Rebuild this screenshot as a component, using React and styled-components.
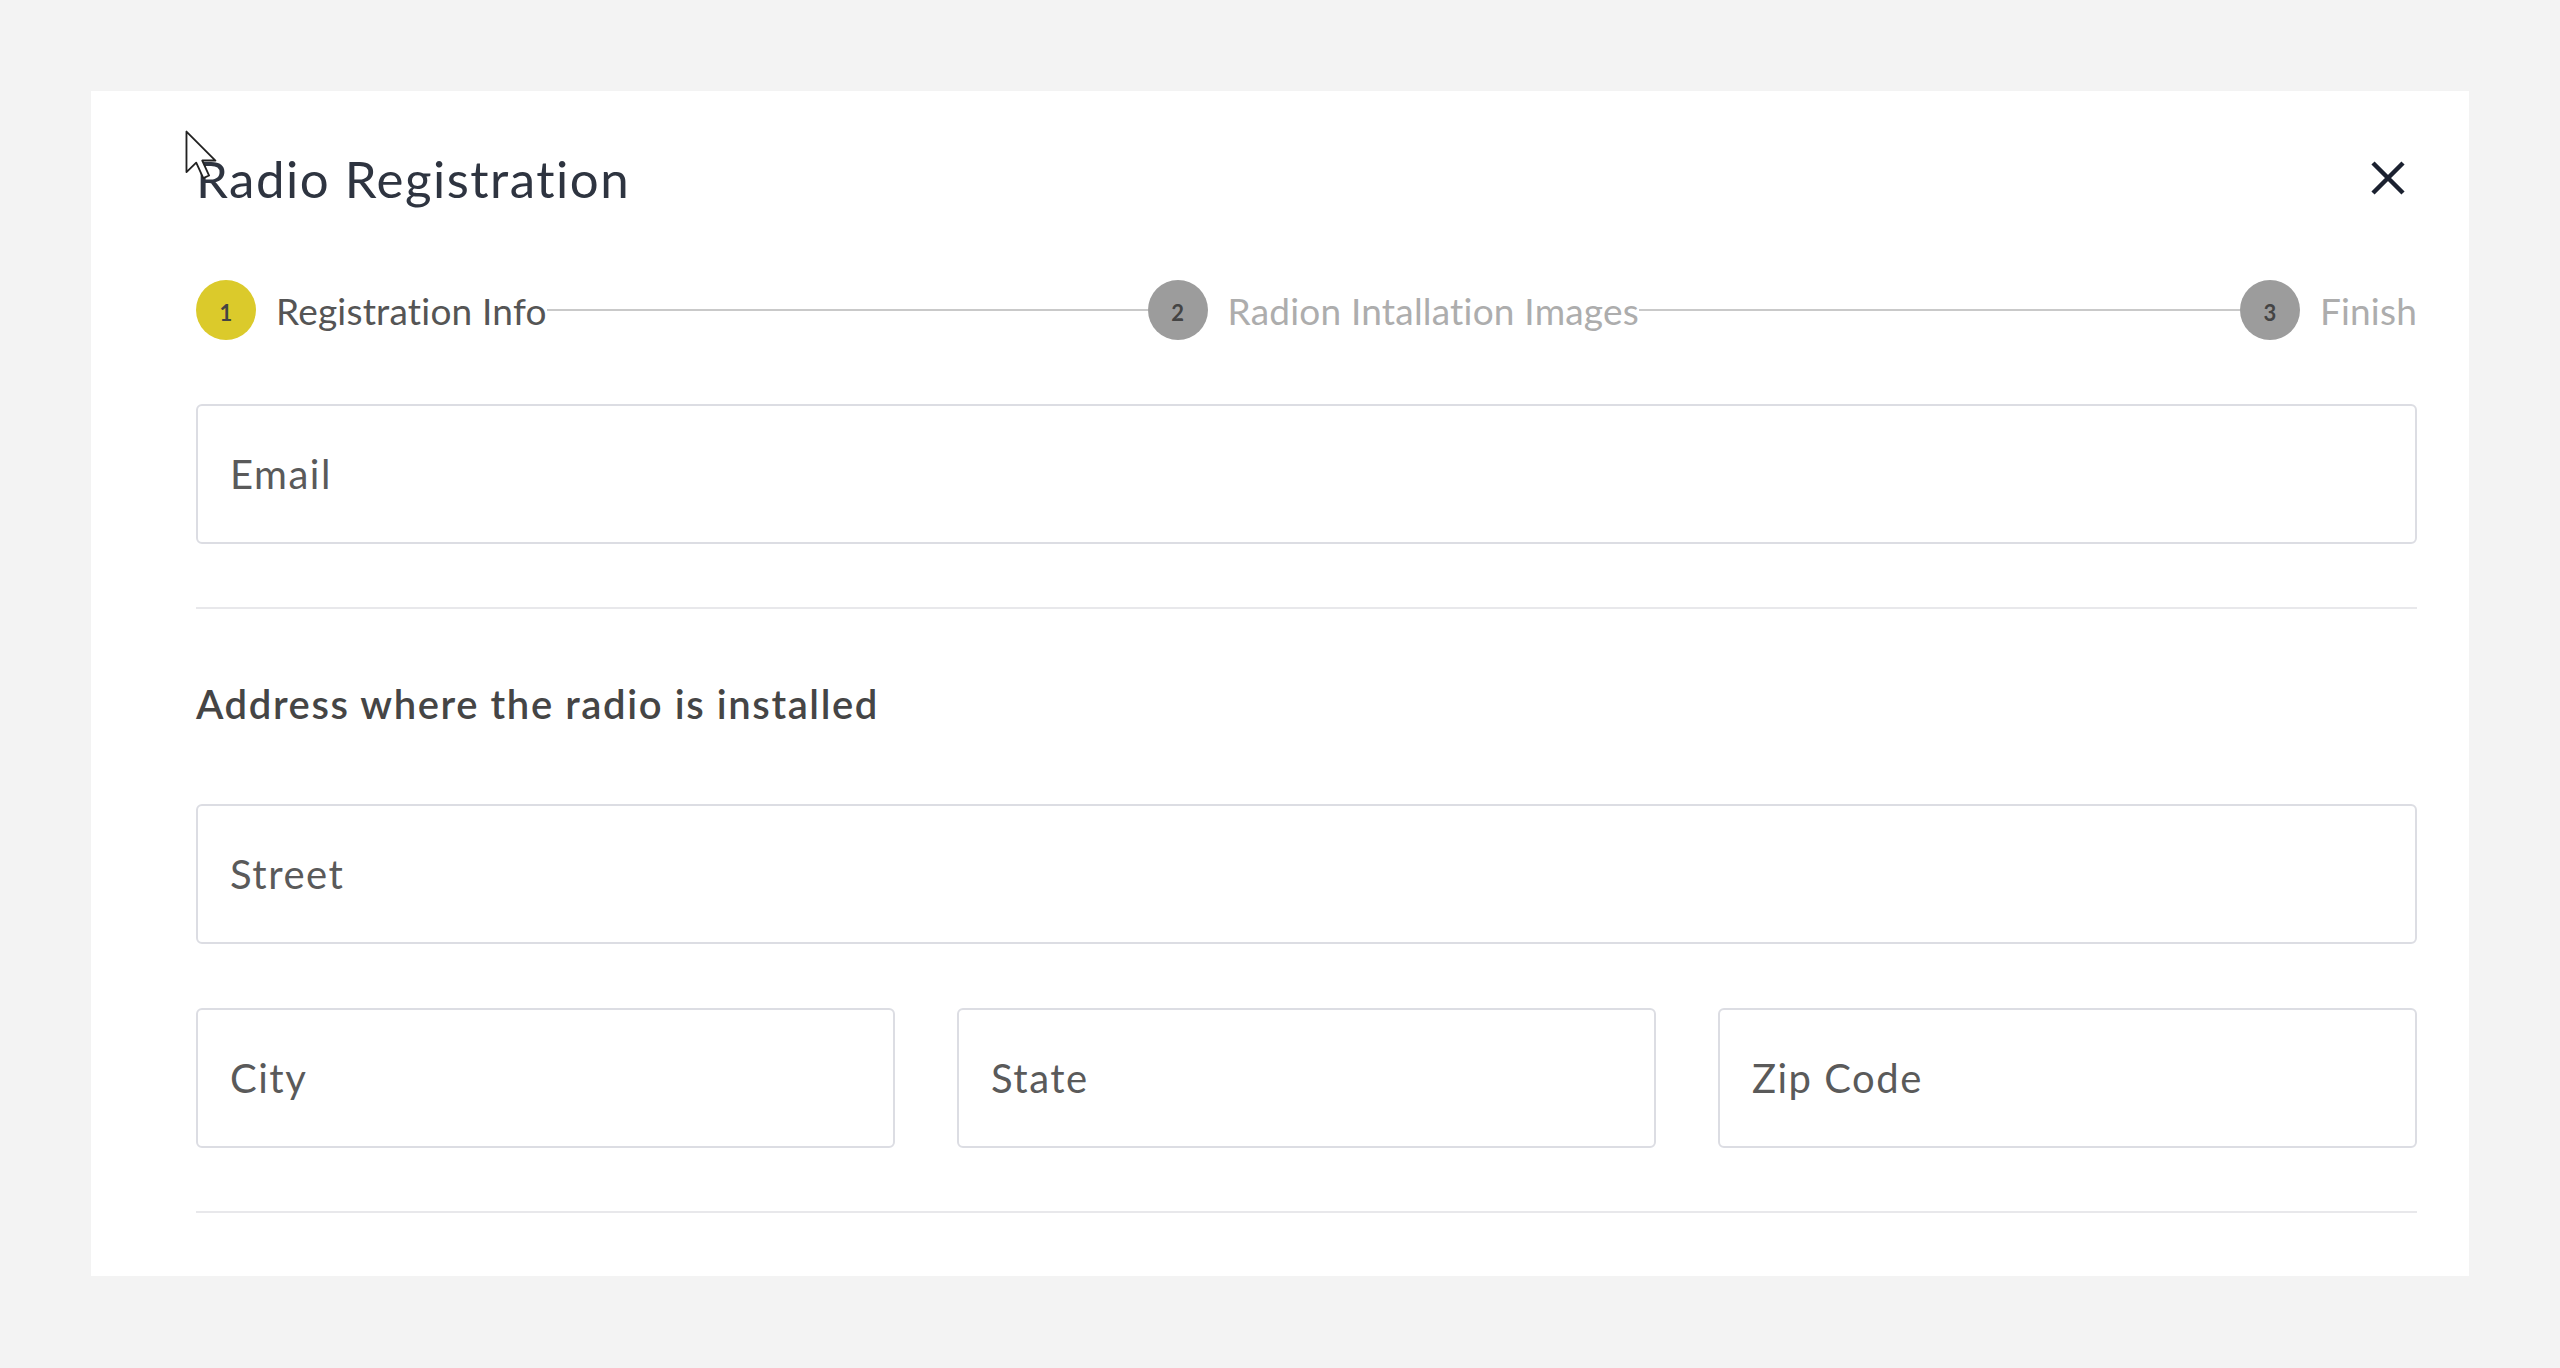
import React from "react";
import styled, { createGlobalStyle } from "styled-components";

const Global = createGlobalStyle`
  html, body { margin: 0; padding: 0; background: #f3f3f3; }
  body { font-family: Lato, "Noto Sans", sans-serif; }
  * { box-sizing: border-box; }
`;

const Page = styled.div`
  min-height: 1368px;
  padding: 91px 91px 91px 91px;
  position: relative;
`;

const Card = styled.div`
  width: 2378px;
  background: #ffffff;
  padding: 57px 52px 63px 105px;
  display: flex;
  flex-direction: column;
`;

const Header = styled.div`
  display: flex;
  align-items: center;
  justify-content: space-between;
  height: 60px;
`;

const Title = styled.h1`
  margin: 0;
  font-family: Lato, "Noto Sans", sans-serif;
  font-weight: 400;
  font-size: 51px;
  color: #2e3440;
  letter-spacing: 1.5px;
`;

const CloseButton = styled.button`
  width: 58px;
  height: 58px;
  border: 0;
  background: transparent;
  padding: 0;
  display: flex;
  align-items: center;
  justify-content: center;
  cursor: pointer;
`;

const Stepper = styled.div`
  display: flex;
  align-items: center;
  margin-top: 72px;
  height: 60px;
`;

const Circle = styled.div`
  width: 60px;
  height: 60px;
  border-radius: 50%;
  flex: none;
  background: ${(p) => (p.$active ? "#dbca2b" : "#9c9c9c")};
  color: #444;
  display: flex;
  align-items: center;
  justify-content: center;
  font-size: 22px;
  font-weight: 700;
  padding-top: 4px;
`;

const StepLabel = styled.span`
  flex: none;
  margin-left: 20px;
  font-size: 37px;
  letter-spacing: 0.2px;
  color: ${(p) => (p.$active ? "#555555" : "#adadad")};
  white-space: nowrap;
`;

const StepLine = styled.div`
  flex: 1;
  height: 2px;
  background: #c9c9c9;
`;

const Input = styled.input`
  display: block;
  width: 100%;
  height: 140px;
  border: 2px solid #dcdde3;
  border-radius: 6px;
  padding: 0 32px;
  font-family: Lato, "Noto Sans", sans-serif;
  font-size: 40px;
  letter-spacing: 1.5px;
  color: #555;
  background: #fff;
  outline: none;
  &::placeholder { color: #5a5a5a; }
`;

const Field = styled.div`
  margin-top: ${(p) => p.$mt || 0}px;
`;

const Divider = styled.hr`
  border: 0;
  height: 2px;
  background: #e8e8eb;
  margin: ${(p) => p.$mt}px 0 0 0;
`;

const SectionLabel = styled.div`
  margin-top: 71px;
  font-size: 40px;
  line-height: 48px;
  font-weight: 600;
  letter-spacing: 1.6px;
  color: #454545;
`;

const Row = styled.div`
  display: grid;
  grid-template-columns: 1fr 1fr 1fr;
  gap: 62px;
  margin-top: 64px;
`;

const Cursor = styled.svg`
  position: absolute;
  left: 184px;
  top: 130px;
  pointer-events: none;
`;

const steps = [
  { n: 1, label: "Registration Info", active: true },
  { n: 2, label: "Radion Intallation Images" },
  { n: 3, label: "Finish" },
];

export default function App() {
  return (
    <>
      <Global />
      <Page>
        <Card>
          <Header>
            <Title>Radio Registration</Title>
            <CloseButton aria-label="Close">
              <svg width="36" height="36" viewBox="0 0 36 36">
                <path d="M3 3 L33 33 M33 3 L3 33" stroke="#1b2130" strokeWidth="4.5" strokeLinecap="butt" />
              </svg>
            </CloseButton>
          </Header>
          <Stepper>
            {steps.map((s, i) => (
              <React.Fragment key={s.n}>
                <Circle $active={s.active}>{s.n}</Circle>
                <StepLabel $active={s.active}>{s.label}</StepLabel>
                {i < steps.length - 1 && <StepLine />}
              </React.Fragment>
            ))}
          </Stepper>
          <Field $mt={64}>
            <Input placeholder="Email" />
          </Field>
          <Divider $mt={63} />
          <SectionLabel>Address where the radio is installed</SectionLabel>
          <Field $mt={76}>
            <Input placeholder="Street" />
          </Field>
          <Row>
            <Input placeholder="City" />
            <Input placeholder="State" />
            <Input placeholder="Zip Code" />
          </Row>
          <Divider $mt={63} />
        </Card>
        <Cursor width="36" height="50" viewBox="0 0 13 19">
          <path d="M0.6 0.6 L0.6 16 L4.3 12.4 L7 18.3 L9.2 17.3 L6.6 11.6 L11.6 11.6 Z" fill="#fff" stroke="#222" strokeWidth="0.7" strokeLinejoin="round" />
        </Cursor>
      </Page>
    </>
  );
}
